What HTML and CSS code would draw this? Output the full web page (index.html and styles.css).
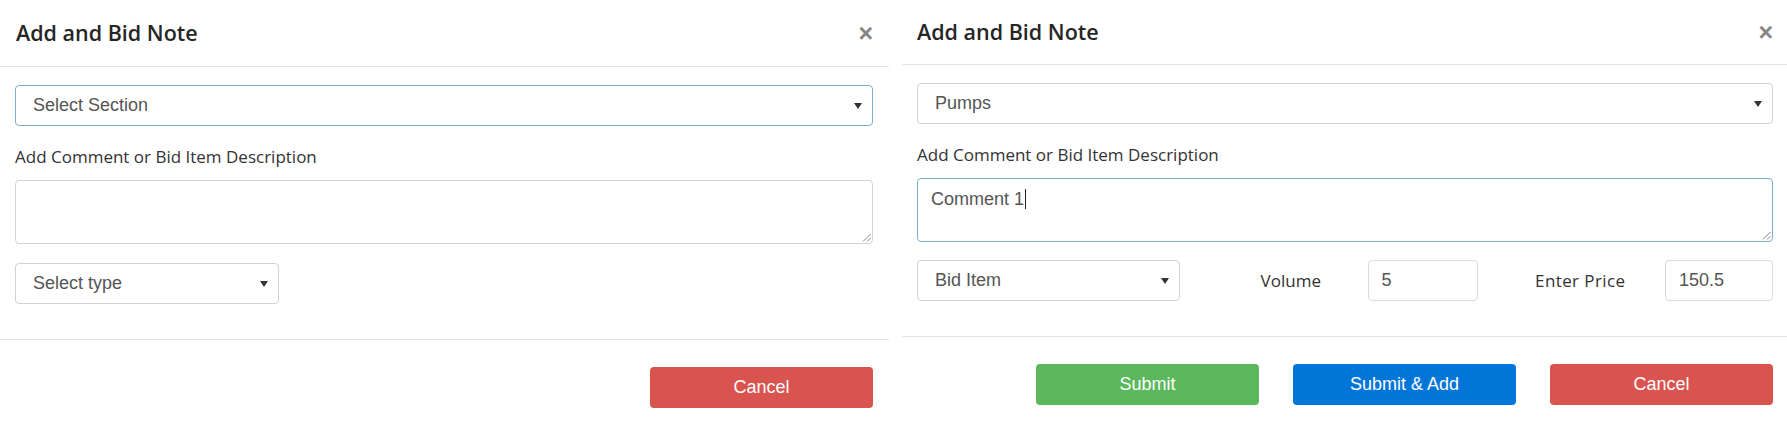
FILE: index.html
```html
<!DOCTYPE html>
<html lang="en">
<head>
<meta charset="utf-8">
<title>Add and Bid Note</title>
<link rel="stylesheet" href="styles.css">
</head>
<body>
<div class="page">
  <section class="modal modal-left">
    <header class="modal-header">
      <h4 class="modal-title">Add and Bid Note</h4>
      <span class="close">&times;</span>
    </header>
    <div class="modal-body">
      <div class="control select is-focus">
        <span>Select Section</span>
        <svg class="caret" width="8" height="6" viewBox="0 0 8 6"><path d="M0 0H8L4 6Z" fill="#333"/></svg>
      </div>
      <div class="field-label">Add Comment or Bid Item Description</div>
      <div class="control textarea">
        <svg class="grip" width="9" height="9" viewBox="0 0 9 9"><path d="M8.5 1L1 8.5M8.5 5L5 8.5" stroke="#888" stroke-width="1" fill="none"/></svg>
      </div>
      <div class="row">
        <div class="control select type-select">
          <span>Select type</span>
          <svg class="caret" width="8" height="6" viewBox="0 0 8 6"><path d="M0 0H8L4 6Z" fill="#333"/></svg>
        </div>
      </div>
    </div>
    <footer class="modal-footer">
      <button class="btn btn-danger">Cancel</button>
    </footer>
  </section>

  <section class="modal modal-right">
    <header class="modal-header">
      <h4 class="modal-title">Add and Bid Note</h4>
      <span class="close">&times;</span>
    </header>
    <div class="modal-body">
      <div class="control select">
        <span>Pumps</span>
        <svg class="caret" width="8" height="6" viewBox="0 0 8 6"><path d="M0 0H8L4 6Z" fill="#333"/></svg>
      </div>
      <div class="field-label">Add Comment or Bid Item Description</div>
      <div class="control textarea is-focus">
        <span class="typed">Comment 1<span class="cursor"></span></span>
        <svg class="grip" width="9" height="9" viewBox="0 0 9 9"><path d="M8.5 1L1 8.5M8.5 5L5 8.5" stroke="#888" stroke-width="1" fill="none"/></svg>
      </div>
      <div class="row bid-row">
        <div class="control select type-select">
          <span>Bid Item</span>
          <svg class="caret" width="8" height="6" viewBox="0 0 8 6"><path d="M0 0H8L4 6Z" fill="#333"/></svg>
        </div>
        <span class="inline-label vol-label">Volume</span>
        <div class="control input"><span>5</span></div>
        <span class="inline-label price-label">Enter Price</span>
        <div class="control input"><span>150.5</span></div>
      </div>
    </div>
    <footer class="modal-footer">
      <button class="btn btn-success">Submit</button>
      <button class="btn btn-primary">Submit &amp; Add</button>
      <button class="btn btn-danger">Cancel</button>
    </footer>
  </section>
</div>
</body>
</html>
```

FILE: styles.css
```css
* {
  box-sizing: border-box;
}

html, body {
  margin: 0;
  padding: 0;
  background: #fff;
}

body {
  width: 1787px;
  height: 431px;
  overflow: hidden;
  font-family: "Open Sans", "Noto Sans", sans-serif;
  color: #333;
}

.page {
  display: flex;
  gap: 13px;
  height: 431px;
}

.modal {
  display: flex;
  flex-direction: column;
  background: #fff;
}

.modal-left {
  width: 889px;
  padding: 0 16px 0 15px;
}

.modal-right {
  width: 885px;
  padding: 0 14px 0 15px;
}

.modal-header {
  display: flex;
  align-items: center;
  justify-content: space-between;
  height: 67px;
  margin: 0 -16px 0 -15px;
  padding: 0 16px 0 16px;
  border-bottom: 1px solid #e5e5e5;
}

.modal-right .modal-header {
  height: 65px;
  margin: 0 -14px 0 -15px;
  padding: 0 14px 0 15px;
}

.modal-title {
  margin: 0;
  font-size: 21.5px;
  font-weight: 600;
  line-height: 28px;
  color: #262626;
}

.close {
  font-family: "Liberation Sans", Arial, sans-serif;
  font-size: 25px;
  font-weight: 700;
  line-height: 1;
  color: #858585;
}

.modal-body {
  padding-top: 18px;
  padding-bottom: 35px;
  border-bottom: 1px solid #e5e5e5;
  margin: 0 -16px 0 -15px;
  padding-left: 15px;
  padding-right: 16px;
}

.modal-right .modal-body {
  margin: 0 -14px 0 -15px;
  padding-left: 15px;
  padding-right: 14px;
  padding-bottom: 35px;
}

.control {
  position: relative;
  display: flex;
  align-items: center;
  border: 1px solid #d2d2d2;
  border-radius: 4px;
  background: #fff;
  font-family: "Liberation Sans", Arial, sans-serif;
  font-size: 18px;
  color: #555;
}

.control.is-focus {
  border-color: #79b1cd;
}

.select {
  height: 41px;
  padding: 0 10px 0 17px;
  justify-content: space-between;
}

.caret {
  display: block;
}

.field-label {
  margin-top: 20px;
  margin-bottom: 12px;
  font-size: 17px;
  line-height: 22px;
  color: #333;
}

.textarea {
  height: 64px;
  align-items: flex-start;
  padding: 9px 13px;
}

.typed {
  display: inline-flex;
  align-items: center;
  color: #555;
  line-height: 22px;
}

.cursor {
  display: inline-block;
  width: 1px;
  height: 20px;
  background: #222;
  margin-left: 1px;
}

.grip {
  position: absolute;
  right: 1px;
  bottom: 1px;
}

.row {
  margin-top: 19px;
}

.bid-row {
  display: grid;
  grid-template-columns: 263px 1fr 110px 1fr 108px;
  align-items: center;
  margin-top: 18px;
}

.type-select {
  width: 264px;
}

.bid-row .type-select {
  width: 263px;
}

.inline-label {
  justify-self: center;
  font-size: 17px;
  color: #333;
}

.vol-label {
  padding-left: 34px;
}

.price-label {
  padding-left: 18px;
  letter-spacing: 0.4px;
}

.input {
  height: 41px;
  padding: 0 13px;
  border-color: #dadada;
}

.modal-footer {
  display: flex;
  justify-content: flex-end;
  gap: 34px;
  padding-top: 27px;
}

.btn {
  width: 223px;
  height: 41px;
  border: 0;
  border-radius: 4px;
  font-family: "Liberation Sans", Arial, sans-serif;
  font-size: 18px;
  color: #fff;
  padding: 0;
}

.btn-danger {
  background: #d9534f;
}

.btn-success {
  background: #5cb85c;
}

.btn-primary {
  background: #0275d8;
}
```
